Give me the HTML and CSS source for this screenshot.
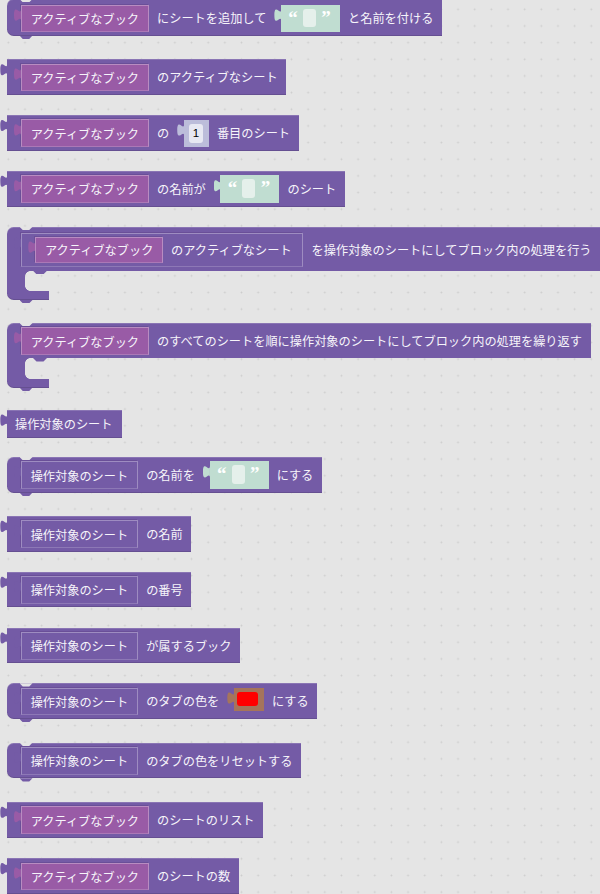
FILE: index.html
```html
<!DOCTYPE html>
<html lang="ja">
<head>
<meta charset="utf-8">
<title>Blocks</title>
<link rel="stylesheet" href="styles.css">
</head>
<body>
<div class="ws">

  <div class="blk stmt first">
    <div class="in book">アクティブなブック</div>
    <span class="lbl">にシートを追加して</span>
    <div class="str"><span class="q">“</span><span class="fld"></span><span class="q">”</span></div>
    <span class="lbl">と名前を付ける</span>
  </div>

  <div class="blk out m236">
    <div class="in book">アクティブなブック</div>
    <span class="lbl">のアクティブなシート</span>
  </div>

  <div class="blk out m20">
    <div class="in book">アクティブなブック</div>
    <span class="lbl">の</span>
    <div class="num"><span class="nfld">1</span></div>
    <span class="lbl">番目のシート</span>
  </div>

  <div class="blk out m20">
    <div class="in book">アクティブなブック</div>
    <span class="lbl">の名前が</span>
    <div class="str"><span class="q">“</span><span class="fld"></span><span class="q">”</span></div>
    <span class="lbl">のシート</span>
  </div>

  <div class="cblk stmt m20">
    <div class="c-top tall">
      <div class="in wrap">
        <div class="in book small">アクティブなブック</div>
        <span class="lbl">のアクティブなシート</span>
      </div>
      <span class="lbl">を操作対象のシートにしてブロック内の処理を行う</span>
    </div>
    <div class="c-mid"><div class="c-side"></div></div>
    <div class="c-bot"></div>
  </div>

  <div class="cblk stmt m23">
    <div class="c-top">
      <div class="in book">アクティブなブック</div>
      <span class="lbl">のすべてのシートを順に操作対象のシートにしてブロック内の処理を繰り返す</span>
    </div>
    <div class="c-mid"><div class="c-side"></div></div>
    <div class="c-bot"></div>
  </div>

  <div class="blk out solo m22">
    <span class="lbl">操作対象のシート</span>
  </div>

  <div class="blk stmt m19">
    <div class="in sheet">操作対象のシート</div>
    <span class="lbl">の名前を</span>
    <div class="str"><span class="q">“</span><span class="fld"></span><span class="q">”</span></div>
    <span class="lbl">にする</span>
  </div>

  <div class="blk out m233">
    <div class="in sheet">操作対象のシート</div>
    <span class="lbl">の名前</span>
  </div>

  <div class="blk out m20">
    <div class="in sheet">操作対象のシート</div>
    <span class="lbl">の番号</span>
  </div>

  <div class="blk out m20">
    <div class="in sheet">操作対象のシート</div>
    <span class="lbl">が属するブック</span>
  </div>

  <div class="blk stmt m20">
    <div class="in sheet">操作対象のシート</div>
    <span class="lbl">のタブの色を</span>
    <div class="col"><span class="sw"></span></div>
    <span class="lbl">にする</span>
  </div>

  <div class="blk stmt m236">
    <div class="in sheet">操作対象のシート</div>
    <span class="lbl">のタブの色をリセットする</span>
  </div>

  <div class="blk out m236">
    <div class="in book">アクティブなブック</div>
    <span class="lbl">のシートのリスト</span>
  </div>

  <div class="blk out m206">
    <div class="in book">アクティブなブック</div>
    <span class="lbl">のシートの数</span>
  </div>

</div>
</body>
</html>
```

FILE: styles.css
```css
html, body {
  margin: 0;
  height: 894px;
  overflow: hidden;
}

body {
  background-color: #e5e5e5;
  background-image: radial-gradient(circle, #cdcdcd 0.7px, rgba(205, 205, 205, 0) 1.2px);
  background-size: 16.667px 16.667px;
  background-position: 0 1px;
  font-family: "Noto Sans CJK JP", "Noto Sans", sans-serif;
  color: #ffffff;
}

.ws {
  display: flex;
  flex-direction: column;
  align-items: flex-start;
  padding-left: 7px;
}

/* ---------- generic block ---------- */
.blk {
  position: relative;
  display: flex;
  align-items: center;
  gap: 8px;
  flex-shrink: 0;
  box-sizing: border-box;
  height: 35.7px;
  padding: 4.4px 8.6px 3.6px 13.7px;
  background: #745ba6;
  font-size: 12.2px;
  line-height: 1;
  white-space: nowrap;
  box-shadow: inset 0 1px 0 rgba(255, 255, 255, 0.16), inset 0 -1px 0 rgba(0, 0, 0, 0.12);
}

.blk.first {
  margin-top: -1px;
  height: 36.7px;
  padding-top: 5.7px;
  padding-bottom: 3.4px;
}

.lbl {
  flex-shrink: 0;
  white-space: nowrap;
  color: #f6f4fa;
}

/* output tab (left) */
.blk.out::before,
.in::before,
.str::before,
.num::before,
.col::before {
  content: "";
  position: absolute;
  left: -6.7px;
  top: 4.2px;
  width: 7px;
  height: 12.5px;
  background: inherit;
  clip-path: path('M7 0 C7 8.3 0 -6.7 0 6.25 C0 19.2 7 4.2 7 12.5 Z');
}

.blk.out::before {
  background: #745ba6;
}

/* statement blocks: rounded left corners, prev notch, next tab */
.stmt {
  border-top-left-radius: 6.7px;
}

.blk.stmt {
  border-bottom-left-radius: 6.7px;
}

.stmt::before {
  content: "";
  position: absolute;
  left: 12.5px;
  top: 0;
  width: 13px;
  height: 3.3px;
  background: #e5e5e5;
  clip-path: polygon(0 0, 100% 0, 75% 100%, 25% 100%);
  z-index: 2;
}

.blk.stmt::after,
.c-bot::after {
  content: "";
  position: absolute;
  left: 12.5px;
  bottom: -3.3px;
  width: 13px;
  height: 3.4px;
  background: #745ba6;
  clip-path: polygon(0 0, 100% 0, 75% 100%, 25% 100%);
}

/* solo output block */
.blk.solo {
  height: 28px;
  padding: 0 9.4px 0 8px;
}

/* ---------- inner value blocks ---------- */
.in {
  position: relative;
  flex-shrink: 0;
  display: flex;
  align-items: center;
  gap: 7.7px;
  box-sizing: border-box;
  height: 27.7px;
  padding: 1px 9px 0 9px;
  border: 1px solid rgba(255, 255, 255, 0.3);
  border-bottom-color: rgba(255, 255, 255, 0.18);
  box-shadow: -1px -1px 0 rgba(60, 30, 90, 0.18);
  white-space: nowrap;
  color: #f6f4fa;
}

.in::before {
  left: -7.7px;
  top: 3.2px;
}

.in.book {
  background: #995ba6;
}

.in.sheet {
  background: #745ba6;
}

.in.wrap {
  background: #745ba6;
  height: 34.7px;
  padding: 0 10px 0 13.3px;
}

.in.book.small {
  height: 26.6px;
}

/* string shadow block */
.str {
  position: relative;
  flex-shrink: 0;
  display: flex;
  align-items: flex-start;
  gap: 5px;
  box-sizing: border-box;
  width: 59px;
  height: 27.6px;
  margin-left: 6.7px;
  padding: 4px 0 0 7px;
  background: #c0ddd1;
}

.q {
  display: block;
  width: 10px;
  height: 14px;
  margin-top: -1px;
  text-align: center;
  font-family: "Liberation Serif", serif;
  font-weight: bold;
  font-size: 19px;
  line-height: 19px;
  color: #ffffff;
  overflow: visible;
}

.fld {
  display: block;
  width: 13px;
  height: 18.3px;
  border-radius: 3px;
  background: #e5f0eb;
}

/* number shadow block */
.num {
  position: relative;
  flex-shrink: 0;
  box-sizing: border-box;
  width: 25px;
  height: 27.4px;
  margin-left: 6.7px;
  padding: 4.7px 0 0 5px;
  background: #bcbdda;
}

.nfld {
  display: flex;
  align-items: center;
  justify-content: center;
  width: 14px;
  height: 18.3px;
  border-radius: 3px;
  background: #e7e8f2;
  color: #000000;
  font-family: "Liberation Sans", sans-serif;
  font-size: 11.5px;
}

/* colour block */
.col {
  position: relative;
  flex-shrink: 0;
  align-self: flex-start;
  box-sizing: border-box;
  width: 30px;
  height: 22.7px;
  margin-left: 6.7px;
  margin-top: 0.6px;
  padding: 3.7px 0 0 3px;
  background: #a5745b;
}

.col::before {
  top: 3.5px;
}

.sw {
  display: block;
  width: 21.3px;
  height: 14px;
  border-radius: 3px;
  background: #ff0000;
}

/* ---------- C blocks ---------- */
.cblk {
  position: relative;
  display: flex;
  flex-direction: column;
  align-items: flex-start;
  flex-shrink: 0;
  font-size: 12.2px;
  line-height: 1;
}

.c-top {
  display: flex;
  align-items: center;
  gap: 8px;
  box-sizing: border-box;
  height: 35px;
  padding: 1.4px 8.6px 0 13.7px;
  background: #745ba6;
  border-top-left-radius: 6.7px;
  white-space: nowrap;
  box-shadow: inset 0 1px 0 rgba(255, 255, 255, 0.16);
}

.c-top.tall {
  height: 44px;
  padding-top: 2.7px;
  gap: 9px;
}

.c-mid {
  position: relative;
  display: flex;
  height: 20.7px;
}

.c-mid::before {
  content: "";
  position: absolute;
  left: 26px;
  top: 0;
  width: 14px;
  height: 3.6px;
  background: #745ba6;
  clip-path: polygon(0 0, 100% 0, 75% 100%, 25% 100%);
}

.c-side {
  position: relative;
  width: 18px;
  background: #745ba6;
}

.c-side::before,
.c-side::after {
  content: "";
  position: absolute;
  left: 100%;
  width: 5px;
  height: 5px;
}

.c-side::before {
  top: 0;
  background: radial-gradient(circle at 100% 100%, rgba(116, 91, 166, 0) 4.5px, #745ba6 5px);
}

.c-side::after {
  bottom: 0;
  background: radial-gradient(circle at 100% 0, rgba(116, 91, 166, 0) 4.5px, #745ba6 5px);
}

.c-bot {
  position: relative;
  width: 42px;
  height: 9px;
  background: #745ba6;
  border-bottom-left-radius: 6.7px;
  box-shadow: inset 0 -1px 0 rgba(0, 0, 0, 0.12);
}

.cblk.m20 .c-bot {
  height: 8.7px;
}

/* ---------- vertical spacing between blocks ---------- */
.m20 { margin-top: 20.1px; }
.m206 { margin-top: 20.6px; }
.m19 { margin-top: 19.3px; }
.m22 { margin-top: 22px; }
.m23 { margin-top: 23px; }
.m233 { margin-top: 23.3px; }
.m236 { margin-top: 23.6px; }
```
